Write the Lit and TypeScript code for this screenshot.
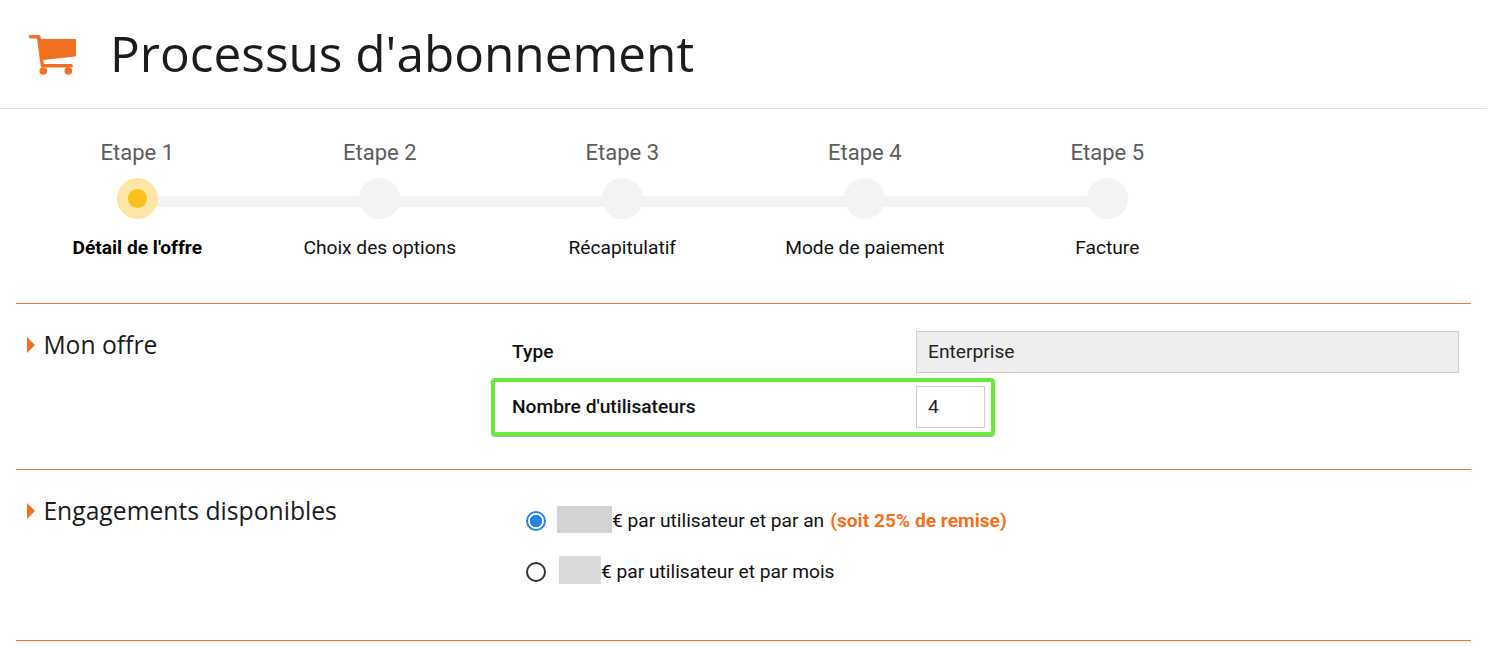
import { LitElement, html, css } from "lit";
import { customElement } from "lit/decorators.js";

const steps = [
  { top: "Etape 1", label: "Détail de l'offre", active: true },
  { top: "Etape 2", label: "Choix des options" },
  { top: "Etape 3", label: "Récapitulatif" },
  { top: "Etape 4", label: "Mode de paiement" },
  { top: "Etape 5", label: "Facture" },
];

@customElement("app-root")
export class AppRoot extends LitElement {
  static styles = css`
    :host {
      display: block;
      width: 1508px;
      height: 647px;
      overflow: hidden;
      background: #fff;
      color: #111;
      font-family: Roboto, sans-serif;
      font-size: 19.2px;
    }
    .page-header {
      display: flex;
      align-items: center;
      width: 1487px;
      height: 109px;
      box-sizing: border-box;
      padding: 0 0 2px 29px;
      border-bottom: 1px solid #e2e2e2;
    }
    .cart {
      width: 48px;
      height: 40px;
      margin: 4px 33px 0 0;
      flex: none;
    }
    h1 {
      margin: 0;
      font-family: "Open Sans", sans-serif;
      font-weight: 400;
      font-size: 49.5px;
      line-height: 60px;
      color: #1c1c1c;
    }
    .steps {
      display: flex;
      padding: 31px 0 0 16px;
      height: 194px;
      box-sizing: border-box;
    }
    .step {
      position: relative;
      width: 242.5px;
      display: flex;
      flex-direction: column;
      align-items: center;
    }
    .step-top {
      font-size: 22px;
      line-height: 26px;
      color: #5c5c5c;
    }
    .dot {
      position: relative;
      z-index: 1;
      width: 41px;
      height: 41px;
      margin: 12px 0 18px;
      border-radius: 50%;
      background: #f3f3f3;
      display: flex;
      align-items: center;
      justify-content: center;
    }
    .step.active .dot {
      background: #fde6a6;
    }
    .step.active .dot::after {
      content: "";
      width: 19px;
      height: 19px;
      border-radius: 50%;
      background: #fdbf1e;
    }
    /* connector between two dots */
    .step:not(:last-child)::after {
      content: "";
      position: absolute;
      top: 56px;
      left: 50%;
      width: 100%;
      height: 11px;
      background: #f3f3f3;
    }
    .step-label {
      line-height: 22px;
      color: #111;
    }
    .step.active .step-label {
      font-weight: 700;
      color: #000;
    }
    .section {
      display: flex;
      margin: 0 37px 0 16px;
      border-top: 1px solid #e07b3c;
    }
    .section.offer {
      height: 166px;
      box-sizing: border-box;
      padding-top: 27px;
    }
    .section.terms {
      height: 172px;
      box-sizing: border-box;
      padding-top: 24px;
      border-bottom: 1px solid #f37021;
    }
    .section-title {
      width: 480px;
      flex: none;
      display: flex;
      align-items: center;
      align-self: flex-start;
      padding-left: 11px;
      box-sizing: border-box;
      font-family: "Open Sans", sans-serif;
      font-size: 24.7px;
      line-height: 34px;
      color: #1c1c1c;
    }
    .offer .section-title {
      margin-top: -3px;
    }
    .arrow {
      width: 0;
      height: 0;
      margin-right: 8.4px;
      border-left: 8px solid #f37021;
      border-top: 8px solid transparent;
      border-bottom: 8px solid transparent;
    }
    .fields {
      flex: 1;
      padding-right: 12px;
    }
    .row {
      display: flex;
      align-items: center;
      height: 42px;
      padding-left: 16px;
      margin-bottom: 5px;
    }
    .row label {
      width: 404px;
      margin-bottom: 2px;
      font-weight: 500;
    }
    .value {
      box-sizing: border-box;
      height: 42px;
      padding: 0 11px;
      border: 1px solid #ccc;
      line-height: 40px;
      color: #222;
    }
    .value.readonly {
      flex: 1;
      background: #eee;
    }
    .value.count {
      width: 69px;
    }
    .row.highlight {
      width: 504px;
      box-sizing: border-box;
      height: 58px;
      margin: 0 0 0 -5px;
      padding-left: 17px;
      border: 4px solid #6ae83c;
      border-radius: 4px;
      box-shadow: 0 1px 1px rgba(0, 0, 0, 0.35);
    }
    .options {
      padding: 1px 0 0 30px;
    }
    .option {
      display: flex;
      align-items: center;
      height: 51px;
    }
    .radio {
      box-sizing: border-box;
      width: 20px;
      height: 20px;
      border-radius: 50%;
      border: 2px solid #333;
      margin-right: 11px;
      flex: none;
    }
    .radio.checked {
      border-color: #2a83ea;
      background: radial-gradient(circle, #2a83ea 0 6px, #fff 6.5px);
    }
    .mask {
      display: inline-block;
      margin-bottom: 2px;
    }
    .mask.year {
      width: 55px;
      height: 27px;
      background: #d3d3d3;
    }
    .mask.month {
      width: 42px;
      height: 28px;
      margin-left: 2px;
      margin-bottom: 3px;
      background: #d9d9d9;
    }
    .discount {
      margin-left: 6px;
      font-weight: 700;
      color: #f37021;
    }
  `;

  render() {
    return html`
      <header class="page-header">
        <svg class="cart" viewBox="0 0 48 40" aria-hidden="true">
          <path
            fill="#f37021"
            d="M1.5 0H9.5a2 2 0 0 1 2 1.6L12 4H46a1 1 0 0 1 1 1V20.5a1 1 0 0 1-.9 1L14.4 25l.5 4H42.2a1.7 1.7 0 0 1 0 3.4H13.5a1.8 1.8 0 0 1-1.8-1.6L8 3.4H1.5a1.7 1.7 0 0 1 0-3.4Z"
          />
          <circle cx="14.3" cy="36" r="3.8" fill="#f37021" />
          <circle cx="39.3" cy="36" r="3.8" fill="#f37021" />
        </svg>
        <h1>Processus d'abonnement</h1>
      </header>
      <div class="steps">
        ${steps.map(
          (s) => html`
            <div class="step ${s.active ? "active" : ""}">
              <div class="step-top">${s.top}</div>
              <div class="dot"></div>
              <div class="step-label">${s.label}</div>
            </div>
          `
        )}
      </div>
      <section class="section offer">
        <div class="section-title"><span class="arrow"></span>Mon offre</div>
        <div class="fields">
          <div class="row">
            <label>Type</label>
            <div class="value readonly">Enterprise</div>
          </div>
          <div class="row highlight">
            <label>Nombre d'utilisateurs</label>
            <div class="value count">4</div>
          </div>
        </div>
      </section>
      <section class="section terms">
        <div class="section-title"><span class="arrow"></span>Engagements disponibles</div>
        <div class="options">
          <div class="option">
            <span class="radio checked"></span>
            <span class="mask year"></span>
            <span>€ par utilisateur et par an</span>
            <span class="discount">(soit 25% de remise)</span>
          </div>
          <div class="option">
            <span class="radio"></span>
            <span class="mask month"></span>
            <span>€ par utilisateur et par mois</span>
          </div>
        </div>
      </section>
    `;
  }
}
